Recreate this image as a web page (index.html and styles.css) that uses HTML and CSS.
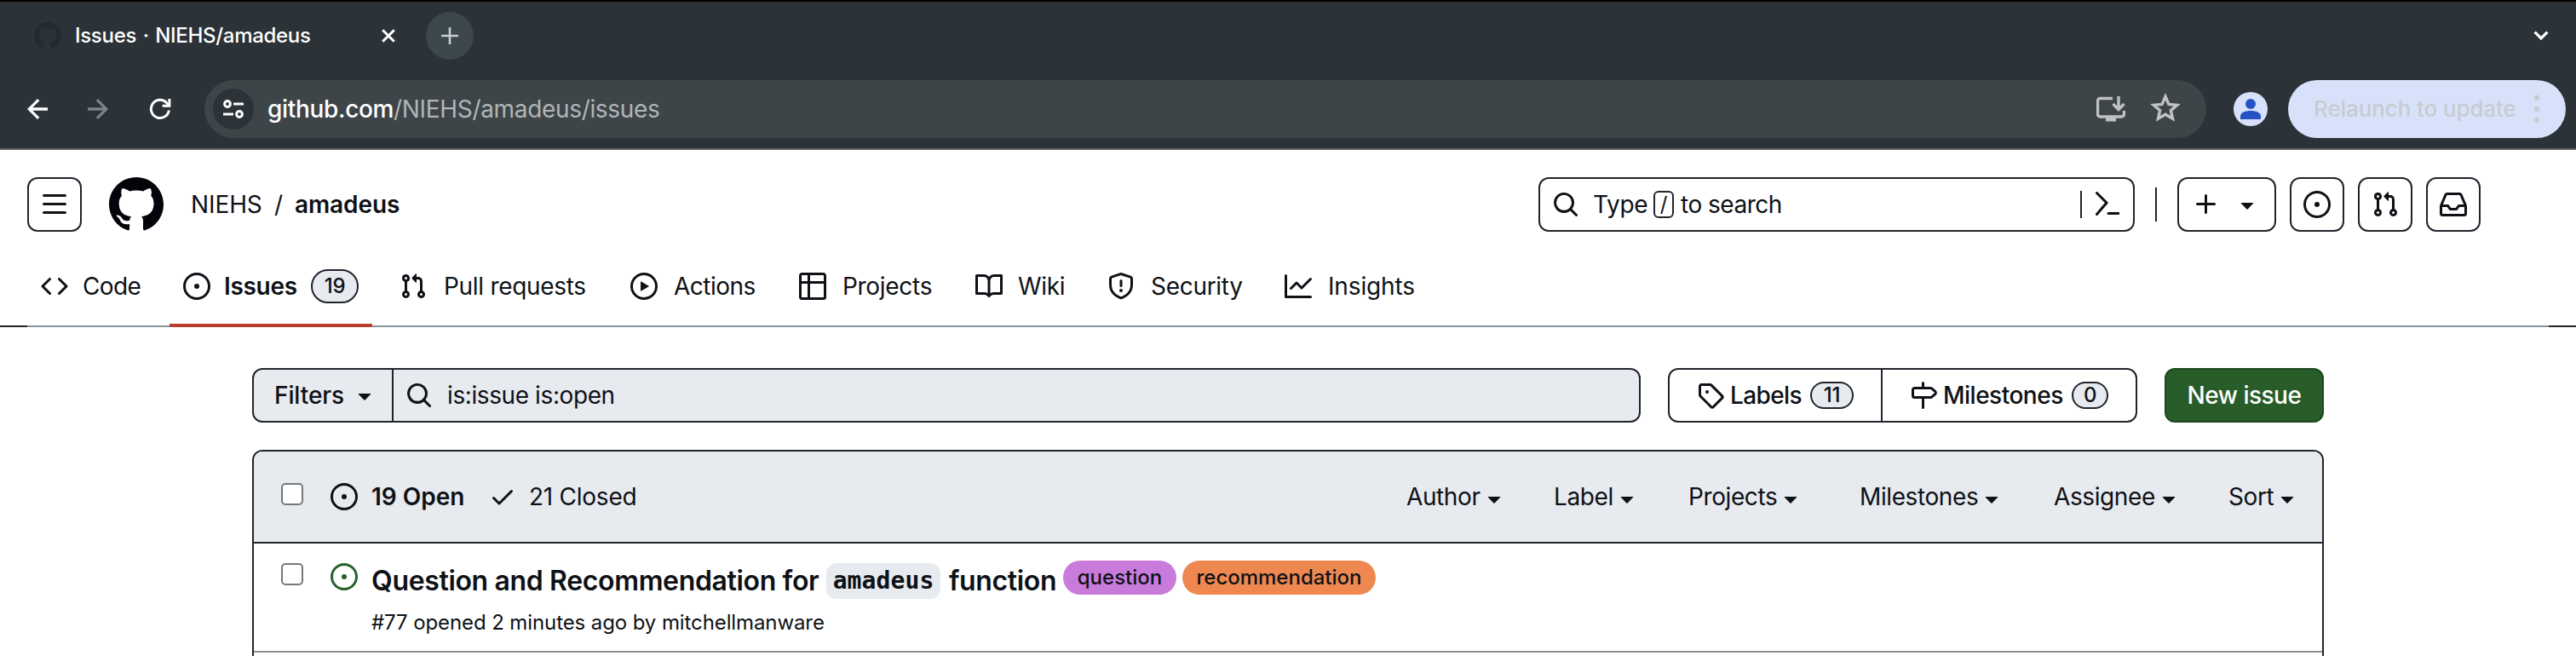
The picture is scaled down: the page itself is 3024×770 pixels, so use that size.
FILE: index.html
```html
<!DOCTYPE html>
<html lang="en">
<head>
<meta charset="utf-8">
<title>Issues · NIEHS/amadeus</title>
<link rel="stylesheet" href="styles.css">
</head>
<body>
<svg class="sprite" aria-hidden="true">
  <symbol id="mark" viewBox="0 0 16 16"><path d="M8 0c4.42 0 8 3.58 8 8a8.013 8.013 0 0 1-5.45 7.59c-.4.08-.55-.17-.55-.38 0-.27.01-1.13.01-2.2 0-.75-.25-1.23-.54-1.48 1.78-.2 3.65-.88 3.65-3.95 0-.88-.31-1.59-.82-2.15.08-.2.36-1.02-.08-2.12 0 0-.67-.22-2.2.82-.64-.18-1.32-.27-2-.27-.68 0-1.36.09-2 .27-1.53-1.03-2.2-.82-2.2-.82-.44 1.1-.16 1.92-.08 2.12-.51.56-.82 1.28-.82 2.15 0 3.06 1.86 3.75 3.64 3.95-.23.2-.44.55-.51 1.07-.46.21-1.61.55-2.33-.66-.15-.24-.6-.83-1.23-.82-.67.01-.27.38.01.53.34.19.73.9.82 1.13.16.45.68 1.31 2.69.94 0 .67.01 1.3.01 1.49 0 .21-.15.45-.55.38A7.995 7.995 0 0 1 0 8c0-4.42 3.58-8 8-8Z"/></symbol>
  <symbol id="issue" viewBox="0 0 16 16"><path d="M8 9.5a1.5 1.5 0 1 0 0-3 1.5 1.5 0 0 0 0 3Z"/><path d="M8 0a8 8 0 1 1 0 16A8 8 0 0 1 8 0ZM1.5 8a6.5 6.5 0 1 0 13 0 6.5 6.5 0 0 0-13 0Z"/></symbol>
  <symbol id="code" viewBox="0 0 16 16"><path d="m11.28 3.22 4.25 4.25a.75.75 0 0 1 0 1.06l-4.25 4.25a.749.749 0 0 1-1.275-.326.749.749 0 0 1 .215-.734L13.94 8l-3.72-3.72a.749.749 0 0 1 .326-1.275.749.749 0 0 1 .734.215Zm-6.56 0a.751.751 0 0 1 1.042.018.751.751 0 0 1 .018 1.042L2.06 8l3.72 3.72a.749.749 0 0 1-.326 1.275.749.749 0 0 1-.734-.215L.47 8.53a.75.75 0 0 1 0-1.06Z"/></symbol>
  <symbol id="pull" viewBox="0 0 16 16"><path d="M1.5 3.25a2.25 2.25 0 1 1 3 2.122v5.256a2.251 2.251 0 1 1-1.5 0V5.372A2.25 2.25 0 0 1 1.5 3.25Zm5.677-.177L9.573.677A.25.25 0 0 1 10 .854V2.5h1A2.5 2.5 0 0 1 13.5 5v5.628a2.251 2.251 0 1 1-1.5 0V5a1 1 0 0 0-1-1h-1v1.646a.25.25 0 0 1-.427.177L7.177 3.427a.25.25 0 0 1 0-.354ZM3.75 2.5a.75.75 0 1 0 0 1.5.75.75 0 0 0 0-1.5Zm0 9.5a.75.75 0 1 0 0 1.5.75.75 0 0 0 0-1.5Zm8.25.75a.75.75 0 1 0 1.5 0 .75.75 0 0 0-1.5 0Z"/></symbol>
  <symbol id="play" viewBox="0 0 16 16"><path d="M8 0a8 8 0 1 1 0 16A8 8 0 0 1 8 0ZM1.5 8a6.5 6.5 0 1 0 13 0 6.5 6.5 0 0 0-13 0Zm4.879-2.773 4.264 2.559a.25.25 0 0 1 0 .428l-4.264 2.559A.25.25 0 0 1 6 10.559V5.442a.25.25 0 0 1 .379-.215Z"/></symbol>
  <symbol id="table" viewBox="0 0 16 16"><path d="M0 1.75C0 .784.784 0 1.750 0h12.5C15.216 0 16 .784 16 1.750v12.5A1.75 1.75 0 0 1 14.25 16H1.75A1.75 1.75 0 0 1 0 14.25ZM6.5 6.5v8h7.75a.25.25 0 0 0 .25-.25V6.5Zm8-1.5V1.750a.25.25 0 0 0-.25-.25H6.5V5Zm-13 1.5v7.75c0 .138.112.25.25.25H5v-8ZM5 5V1.5H1.75a.25.25 0 0 0-.25.25V5Z"/></symbol>
  <symbol id="book" viewBox="0 0 16 16"><path d="M0 1.75A.75.75 0 0 1 .75 1h4.253c1.227 0 2.317.59 3 1.501A3.743 3.743 0 0 1 11.006 1h4.245a.75.75 0 0 1 .75.75v10.5a.75.75 0 0 1-.75.75h-4.507a2.25 2.25 0 0 0-1.591.659l-.622.621a.75.75 0 0 1-1.06 0l-.622-.621A2.25 2.25 0 0 0 5.258 13H.75a.75.75 0 0 1-.75-.75Zm7.251 10.324.004-5.073-.002-2.253A2.25 2.25 0 0 0 5.003 2.5H1.5v9h3.757a3.75 3.75 0 0 1 1.994.574ZM8.755 4.75l-.004 7.322a3.752 3.752 0 0 1 1.992-.572H14.5v-9h-3.495a2.25 2.25 0 0 0-2.25 2.25Z"/></symbol>
  <symbol id="shield" viewBox="0 0 16 16"><path d="M7.467.133a1.748 1.748 0 0 1 1.066 0l5.25 1.68A1.75 1.75 0 0 1 15 3.48V7c0 1.566-.32 3.182-1.303 4.682-.983 1.498-2.585 2.813-5.032 3.855a1.697 1.697 0 0 1-1.33 0c-2.447-1.042-4.049-2.357-5.032-3.855C1.32 10.182 1 8.566 1 7V3.48a1.755 1.755 0 0 1 1.217-1.667Zm.61 1.429a.25.25 0 0 0-.153 0l-5.25 1.68a.25.25 0 0 0-.174.238V7c0 1.358.275 2.666 1.057 3.86.784 1.194 2.121 2.34 4.366 3.297a.196.196 0 0 0 .154 0c2.245-.956 3.582-2.104 4.366-3.298C13.225 9.666 13.5 8.36 13.5 7V3.48a.251.251 0 0 0-.174-.237l-5.25-1.68ZM8.75 4.75v3a.75.75 0 0 1-1.5 0v-3a.75.75 0 0 1 1.5 0ZM9 10.5a1 1 0 1 1-2 0 1 1 0 0 1 2 0Z"/></symbol>
  <symbol id="graph" viewBox="0 0 16 16"><path d="M1.5 1.75V13.5h13.75a.75.75 0 0 1 0 1.5H.75a.75.75 0 0 1-.75-.75V1.75a.75.75 0 0 1 1.5 0Zm14.28 2.53-5.25 5.25a.75.75 0 0 1-1.06 0L7 7.06 4.28 9.78a.751.751 0 0 1-1.042-.018.751.751 0 0 1-.018-1.042l3.25-3.25a.75.75 0 0 1 1.06 0L10 7.94l4.72-4.72a.751.751 0 0 1 1.042.018.751.751 0 0 1 .018 1.042Z"/></symbol>
  <symbol id="search" viewBox="0 0 16 16"><path d="M10.68 11.74a6 6 0 0 1-7.922-8.982 6 6 0 0 1 8.982 7.922l3.04 3.04a.749.749 0 0 1-.326 1.275.749.749 0 0 1-.734-.215ZM11.5 7a4.499 4.499 0 1 0-8.997 0A4.499 4.499 0 0 0 11.5 7Z"/></symbol>
  <symbol id="caret" viewBox="0 0 16 16"><path d="m4.427 7.427 3.396 3.396a.25.25 0 0 0 .354 0l3.396-3.396A.25.25 0 0 0 11.396 7H4.604a.25.25 0 0 0-.177.427Z"/></symbol>
  <symbol id="plus" viewBox="0 0 16 16"><path d="M7.75 2a.75.75 0 0 1 .75.75V7h4.25a.75.75 0 0 1 0 1.5H8.5v4.25a.75.75 0 0 1-1.5 0V8.5H2.75a.75.75 0 0 1 0-1.5H7V2.75A.75.75 0 0 1 7.75 2Z"/></symbol>
  <symbol id="inbox" viewBox="0 0 16 16"><path d="M2.8 2.06A1.75 1.75 0 0 1 4.41 1h7.18c.7 0 1.333.417 1.61 1.06l2.74 6.395c.04.093.06.194.06.295v4.5A1.75 1.75 0 0 1 14.25 15H1.75A1.75 1.75 0 0 1 0 13.25v-4.5c0-.101.02-.202.06-.295Zm1.61.44a.25.25 0 0 0-.23.152L1.887 8H4.75a.75.75 0 0 1 .6.3L6.625 10h2.75l1.275-1.7a.75.75 0 0 1 .6-.3h2.863L11.82 2.652a.25.25 0 0 0-.23-.152Zm10.09 7h-2.875l-1.275 1.7a.75.75 0 0 1-.6.3h-3.5a.75.75 0 0 1-.6-.3L4.375 9.5H1.5v3.75c0 .138.112.25.25.25h12.5a.25.25 0 0 0 .25-.25Z"/></symbol>
  <symbol id="menu" viewBox="0 0 16 16"><path d="M1 2.75A.75.75 0 0 1 1.75 2h12.5a.75.75 0 0 1 0 1.5H1.75A.75.75 0 0 1 1 2.75Zm0 5A.75.75 0 0 1 1.75 7h12.5a.75.75 0 0 1 0 1.5H1.75A.75.75 0 0 1 1 7.75ZM1.75 12h12.5a.75.75 0 0 1 0 1.5H1.75a.75.75 0 0 1 0-1.5Z"/></symbol>
  <symbol id="tag" viewBox="0 0 16 16"><path d="M1 7.775V2.75C1 1.784 1.784 1 2.75 1h5.025c.464 0 .91.184 1.238.513l6.25 6.25a1.75 1.75 0 0 1 0 2.474l-5.026 5.026a1.75 1.75 0 0 1-2.474 0l-6.25-6.25A1.752 1.752 0 0 1 1 7.775Zm1.5 0c0 .066.026.13.073.177l6.25 6.25a.25.25 0 0 0 .354 0l5.025-5.025a.25.25 0 0 0 0-.354l-6.25-6.25a.25.25 0 0 0-.177-.073H2.75a.25.25 0 0 0-.25.25ZM6 5a1 1 0 1 1 0 2 1 1 0 0 1 0-2Z"/></symbol>
  <symbol id="milestone" viewBox="0 0 16 16"><path d="M7.75 0a.75.75 0 0 1 .75.75V3h3.634c.414 0 .814.147 1.13.414l2.07 1.75a1.75 1.75 0 0 1 0 2.672l-2.07 1.75a1.75 1.75 0 0 1-1.13.414H8.5v5.25a.75.75 0 0 1-1.5 0V10H2.75A1.75 1.75 0 0 1 1 8.25v-3.5C1 3.784 1.784 3 2.75 3H7V.75A.75.75 0 0 1 7.75 0Zm4.384 8.5a.25.25 0 0 0 .161-.06l2.07-1.75a.248.248 0 0 0 0-.38l-2.07-1.75a.25.25 0 0 0-.161-.06H2.75a.25.25 0 0 0-.25.25v3.5c0 .138.112.25.25.25h9.384Z"/></symbol>
  <symbol id="check" viewBox="0 0 16 16"><path d="M13.78 4.22a.75.75 0 0 1 0 1.06l-7.25 7.25a.75.75 0 0 1-1.06 0L2.22 9.28a.751.751 0 0 1 .018-1.042.751.751 0 0 1 1.042-.018L6 10.94l6.72-6.72a.75.75 0 0 1 1.06 0Z"/></symbol>
  <symbol id="arrow" viewBox="0 0 24 24"><path d="M12 0 14.3 2.300 6.200 10.300H24v3.400H6.200l8.100 8L12 24 0 12Z"/></symbol>
</svg>

<div class="chrome">
  <div class="tabstrip">
    <svg class="favicon"><use href="#mark"/></svg>
    <span class="tab-title">Issues · NIEHS/amadeus</span>
    <svg class="tab-close" viewBox="0 0 16 16"><path d="M1.2 1.2 14.8 14.8M14.8 1.2 1.2 14.8"/></svg>
    <span class="new-tab"><svg viewBox="0 0 20 20"><path d="M10 0V20M0 10H20"/></svg></span>
    <svg class="tab-search" viewBox="0 0 18 12"><path d="M1.6 1.6 9 9l7.400-7.400"/></svg>
  </div>
  <div class="toolbar">
    <svg class="nav-back"><use href="#arrow"/></svg>
    <svg class="nav-forward"><use href="#arrow"/></svg>
    <svg class="nav-reload" viewBox="0 0 26 26"><path class="reload-arc" d="M23.400 14.500A10.600 10.600 0 1 1 20.500 5.500L23 8"/><path class="reload-head" d="M25.400 1V10.700H15.700V7.700H22.400V1Z"/></svg>
    <div class="omnibox">
      <span class="site-info"><svg viewBox="0 0 24 24"><circle cx="5" cy="6" r="3.400"/><path d="M12 6H24M0 18H12"/><circle cx="19" cy="18" r="3.400"/></svg></span>
      <span class="url"><b>github.com</b>/NIEHS/amadeus/issues</span>
      <svg class="install" viewBox="0 0 34 30"><path d="M19 2.500H4.500a3 3 0 0 0-3 3V21a3 3 0 0 0 3 3h25a3 3 0 0 0 3-3V17"/><path d="M26 0V15M19.500 9 26 15.500 32.500 9"/><path class="solid" d="M11 24H23V29.500H11Z"/></svg>
      <svg class="star" viewBox="0 0 34 32"><path d="M17 4 20.700 12.600 30 13.400 23 19.500 25.100 28.500 17 23.800 8.900 28.500 11 19.500 4 13.400 13.300 12.600Z"/></svg>
    </div>
    <span class="avatar"><svg viewBox="0 0 24 24"><circle cx="12" cy="6" r="6"/><path d="M0 24V20.500C0 16 6 14 12 14s12 2 12 6.500V24Z"/></svg></span>
    <div class="relaunch"><span class="relaunch-text">Relaunch to update</span><svg viewBox="0 0 8 34"><circle cx="4" cy="4" r="3.200"/><circle cx="4" cy="17" r="3.200"/><circle cx="4" cy="30" r="3.200"/></svg></div>
  </div>
</div>

<header class="header">
  <span class="box menu"><svg class="icon"><use href="#menu"/></svg></span>
  <svg class="logo"><use href="#mark"/></svg>
  <span class="owner">NIEHS</span><span class="sep">/</span><span class="repo">amadeus</span>
  <div class="search">
    <svg class="icon"><use href="#search"/></svg>
    <span class="search-type">Type</span><kbd>/</kbd><span class="search-rest">to search</span>
    <span class="search-bar"></span>
    <svg class="prompt" viewBox="0 0 28 30"><path d="M1.500 1.500 13 13 1.500 26.500M15 25.500H27"/></svg>
  </div>
  <span class="divider"></span>
  <span class="box create"><svg class="icon"><use href="#plus"/></svg><svg class="icon"><use href="#caret"/></svg></span>
  <span class="box"><svg class="icon"><use href="#issue"/></svg></span>
  <span class="box"><svg class="icon"><use href="#pull"/></svg></span>
  <span class="box"><svg class="icon"><use href="#inbox"/></svg></span>
</header>

<nav class="tabs">
  <a class="tab t-code"><svg class="icon"><use href="#code"/></svg><span>Code</span></a>
  <a class="tab t-issues"><svg class="icon"><use href="#issue"/></svg><span>Issues</span><i class="counter">19</i></a>
  <a class="tab t-pulls"><svg class="icon"><use href="#pull"/></svg><span>Pull requests</span></a>
  <a class="tab t-actions"><svg class="icon"><use href="#play"/></svg><span>Actions</span></a>
  <a class="tab t-projects"><svg class="icon"><use href="#table"/></svg><span>Projects</span></a>
  <a class="tab t-wiki"><svg class="icon"><use href="#book"/></svg><span>Wiki</span></a>
  <a class="tab t-security"><svg class="icon"><use href="#shield"/></svg><span>Security</span></a>
  <a class="tab t-insights"><svg class="icon"><use href="#graph"/></svg><span>Insights</span></a>
</nav>

<main class="main">
  <div class="controls">
    <div class="filter">
      <span class="filter-button"><span>Filters</span><svg class="icon"><use href="#caret"/></svg></span>
      <span class="query"><svg class="icon"><use href="#search"/></svg><span>is:issue is:open</span></span>
    </div>
    <div class="subnav">
      <span class="sub sub-labels"><svg class="icon"><use href="#tag"/></svg><span>Labels</span><i class="counter">11</i></span>
      <span class="sub sub-milestones"><svg class="icon"><use href="#milestone"/></svg><span>Milestones</span><i class="counter">0</i></span>
    </div>
    <span class="new-issue">New issue</span>
  </div>

  <section class="list">
    <div class="list-head">
      <span class="checkbox"></span>
      <svg class="icon"><use href="#issue"/></svg><span class="open">19 Open</span>
      <svg class="icon check"><use href="#check"/></svg><span class="closed">21 Closed</span>
      <div class="menus">
        <span class="m-author">Author<svg class="icon"><use href="#caret"/></svg></span>
        <span class="m-label">Label<svg class="icon"><use href="#caret"/></svg></span>
        <span class="m-projects">Projects<svg class="icon"><use href="#caret"/></svg></span>
        <span class="m-milestones">Milestones<svg class="icon"><use href="#caret"/></svg></span>
        <span class="m-assignee">Assignee<svg class="icon"><use href="#caret"/></svg></span>
        <span class="m-sort">Sort<svg class="icon"><use href="#caret"/></svg></span>
      </div>
    </div>
    <article class="row">
      <span class="checkbox"></span>
      <svg class="icon opened"><use href="#issue"/></svg>
      <div class="body">
        <div class="title"><span class="title-a">Question and Recommendation for</span><code>amadeus</code><span class="title-b">function</span><span class="pill question">question</span><span class="pill recommendation">recommendation</span></div>
        <div class="meta">#77 opened 2 minutes ago by mitchellmanware</div>
      </div>
    </article>
  </section>
</main>
</body>
</html>
```
FILE: styles.css
```css
* { box-sizing: border-box; }
body {
  margin: 0;
  width: 3024px;
  height: 770px;
  overflow: hidden;
  background: #fff;
  color: #0e1116;
  font: 28px/40px Inter, "Liberation Sans", sans-serif;
  letter-spacing: -0.3px;
}
svg { display: block; flex: none; fill: currentColor; }
span, i, a, div { white-space: nowrap; }
.sprite { display: none; }
.icon { width: 32px; height: 32px; }

/* browser window */
.chrome {
  height: 176px;
  background: #2b3238;
  border-top: 2px solid #000;
  border-bottom: 2px solid #5b6468;
  color: #fff;
}
.tabstrip { display: flex; align-items: center; height: 80px; padding: 0 32px 0 40px; }
.favicon { width: 32px; height: 32px; color: #24292e; }
.tab-title { width: 360px; margin-left: 16px; font-size: 24px; font-weight: 500; letter-spacing: -0.3px; word-spacing: 1.5px; }
.tab-close { width: 16px; height: 16px; stroke: #fff; stroke-width: 3; }
.new-tab { display: flex; align-items: center; justify-content: center; width: 56px; height: 56px; margin-left: 36px; border-radius: 50%; background: #3c474e; }
.new-tab svg { width: 20px; height: 20px; stroke: #c9cccd; stroke-width: 2.6; }
.tab-search { width: 18px; height: 12px; margin-left: auto; fill: none; stroke: #fff; stroke-width: 3.2; }
.toolbar { display: flex; align-items: center; height: 92px; padding: 0 12px 0 32px; }
.nav-back { width: 24px; height: 24px; }
.nav-forward { width: 24px; height: 24px; margin-left: 47px; transform: scaleX(-1); color: #7e8386; }
.nav-reload { width: 26px; height: 26px; margin-left: 48px; }
.reload-arc { fill: none; stroke: #fff; stroke-width: 3; }
.omnibox { display: flex; align-items: center; width: 2350px; height: 68px; margin-left: 39px; padding: 0 31px 0 10px; border-radius: 34px; background: #3d4548; }
.site-info { display: flex; align-items: center; justify-content: center; width: 48px; height: 48px; border-radius: 50%; background: #2b3238; }
.site-info svg { width: 24px; height: 24px; fill: none; stroke: #fff; stroke-width: 3; }
.url { margin-left: 16px; color: #b0b5b7; letter-spacing: -0.33px; }
.url b { font-weight: 500; color: #fff; }
.install { width: 34px; height: 30px; margin: 0 1px 0 auto; fill: none; stroke: #bfc1c2; stroke-width: 3.4; }
.install .solid { fill: #bfc1c2; stroke: none; }
.star { width: 36px; height: 34px; margin: 0 -1px 5px 28px; fill: none; stroke: #bfc1c2; stroke-width: 3.2; }
.avatar { display: flex; align-items: center; justify-content: center; width: 40px; height: 40px; margin-left: 32px; border-radius: 50%; background: #d7e2fa; color: #2353c4; }
.avatar svg { width: 24px; height: 24px; }
.relaunch { display: flex; align-items: center; justify-content: space-between; width: 326px; height: 68px; margin-left: auto; padding: 0 30px; border-radius: 34px; background: #d7e2fa; color: #c8cbd0; }
.relaunch-text { font-size: 26px; font-weight: 500; letter-spacing: -0.1px; }
.relaunch svg { width: 8px; height: 34px; }

/* repository header */
.header { display: flex; align-items: center; height: 64px; margin-top: 32px; padding: 0 112px 0 32px; }
.box { display: flex; align-items: center; justify-content: center; width: 64px; height: 64px; margin-left: 16px; border: 2px solid #20252c; border-radius: 12px; }
.box.menu { margin-left: 0; }
.logo { width: 64px; height: 64px; margin-left: 32px; color: #02040a; }
.owner { width: 98px; margin-left: 32px; letter-spacing: -0.1px; }
.sep { width: 24px; }
.repo { font-weight: 600; letter-spacing: -0.1px; }
.search { display: flex; align-items: center; width: 700px; height: 64px; margin-left: auto; padding: 0 16px 0 14px; border: 2px solid #20252c; border-radius: 12px; }
.search-type { width: 71px; margin-left: 16px; }
kbd { width: 24px; height: 32px; border: 2px solid #20252c; border-radius: 6px; font: 24px/28px Inter, sans-serif; text-align: center; }
.search-rest { margin-left: 8px; letter-spacing: -0.5px; }
.search-bar { width: 2px; height: 32px; margin-left: auto; background: #20252c; }
.prompt { width: 28px; height: 30px; margin-left: 16px; fill: none; stroke: #0e1116; stroke-width: 3; stroke-linecap: round; }
.divider { width: 2px; height: 40px; margin: 0 8px 0 24px; background: #20252c; }
.box.create { width: 116px; gap: 16px; }

/* tabs */
.tabs { display: flex; height: 96px; margin-top: 16px; padding: 0 32px; align-items: center; background: linear-gradient(90deg, #20252c 32px, #88929a 32px 2992px, #20252c 2992px) 0 94px / 100% 2px no-repeat; }
.tab { display: flex; align-items: center; height: 96px; padding: 0 16px; gap: 16px; }
.t-code { width: 167px; gap: 17px; letter-spacing: -0.6px; }
.t-issues { width: 238px; padding-right: 0; margin-right: 16px; border-bottom: 4px solid #b83f30; border-top: 4px solid transparent; border-radius: 2px; }
.t-issues span { width: 86px; font-weight: 600; }
.t-pulls { width: 271px; gap: 20px; }
.t-actions { width: 198px; gap: 19px; letter-spacing: -0.5px; }
.t-projects { width: 207px; gap: 19px; letter-spacing: -0.3px; }
.t-wiki { width: 155px; gap: 18px; }
.t-security { width: 208px; gap: 19px; }
.t-insights { gap: 19px; letter-spacing: -0.15px; }
.counter { height: 32px; border: 2px solid #20252c; border-radius: 20px; background: #e7eaef; font: 500 24px/28px Inter, sans-serif; text-align: center; }
.t-issues .counter { width: 56px; height: 40px; line-height: 36px; }

/* issue list controls */
.main { width: 2432px; margin: 48px auto 0; }
.controls { display: flex; height: 64px; margin-bottom: 32px; }
.filter { display: flex; width: 1630px; border: 2px solid #20252c; border-radius: 12px; background: #e7eaef; }
.filter-button { display: flex; align-items: center; width: 164px; padding-left: 24px; border-right: 2px solid #20252c; font-weight: 500; }
.filter-button span { width: 90px; letter-spacing: -0.1px; }
.query { display: flex; align-items: center; gap: 17px; padding-left: 14px; letter-spacing: -0.4px; }
.subnav { display: flex; width: 551px; margin-left: 32px; border: 2px solid #20252c; border-radius: 12px; font-weight: 500; }
.sub { display: flex; align-items: center; }
.sub-labels { width: 250px; padding-left: 32px; border-right: 2px solid #20252c; }
.sub-labels span { width: 94px; margin-left: 7px; letter-spacing: -0.6px; }
.sub-labels .counter { width: 51px; }
.sub-milestones { padding-left: 32px; }
.sub-milestones span { width: 151px; margin-left: 7px; letter-spacing: -0.5px; }
.sub-milestones .counter { width: 43px; }
.new-issue { width: 187px; margin-left: 32px; border: 2px solid #1d4720; border-radius: 12px; background: #285c28; color: #fff; font-weight: 500; line-height: 60px; text-align: center; letter-spacing: -0.5px; }

/* issue list */
.list { height: 260px; border: 2px solid #20252c; border-bottom: 0; border-radius: 12px 12px 0 0; overflow: hidden; }
.list-head { display: flex; height: 108px; padding: 32px; align-items: flex-start; border-bottom: 2px solid #20252c; background: #e7eaef; line-height: 42px; }
.checkbox { flex: none; width: 26px; height: 26px; border: 2px solid #74777b; border-radius: 5px; background: #fff; }
.list-head .checkbox, .list-head > .icon { margin-top: 5px; }
.checkbox + .icon { margin-left: 32px; }
.open { width: 124px; margin-left: 16px; font-weight: 600; letter-spacing: 0; }
.check { margin-left: 14px; }
.closed { margin-left: 15px; letter-spacing: -0.25px; }
.menus { display: flex; margin-left: auto; width: 1043px; letter-spacing: -0.4px; }
.menus span { display: flex; flex: none; align-items: center; }
.menus .icon { margin-top: 3px; }
.m-author { width: 173px; }
.m-label { width: 158px; }
.m-projects { width: 201px; }
.m-milestones { width: 228px; }
.m-assignee { width: 205px; }
.row { display: flex; height: 128px; padding: 23px 32px 0; border-bottom: 2px solid #8b8f96; }
.opened { color: #28602c; }
.body { margin-left: 16px; }
.title { display: flex; height: 42px; font-size: 32px; font-weight: 600; line-height: 41px; letter-spacing: -0.35px; }
.title-a { width: 534px; }
code { width: 134px; height: 42px; border-radius: 12px; background: #e7eaef; font: 700 28px/42px "DejaVu Sans Mono", monospace; letter-spacing: 0.1px; text-align: center; }
.title-b { width: 134px; margin-left: 10px; }
.pill { height: 40px; margin-top: -3px; border-radius: 20px; font-size: 24px; font-weight: 500; line-height: 40px; text-align: center; letter-spacing: 0; }
.question { width: 133px; background: #c97bdc; }
.recommendation { width: 227px; margin-left: 7px; background: #ee8850; }
.meta { margin-top: 10px; font-size: 24px; line-height: 36px; letter-spacing: -0.1px; }
```
